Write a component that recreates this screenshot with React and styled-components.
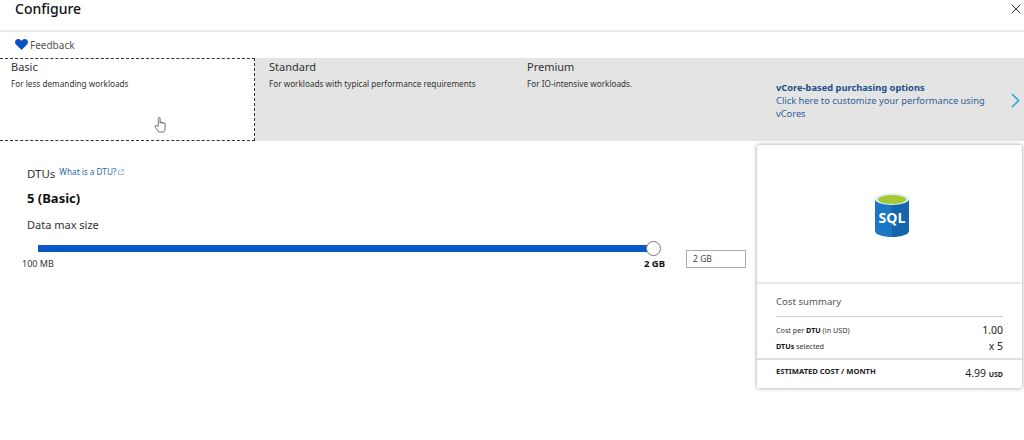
import React from 'react';
import styled, { createGlobalStyle } from 'styled-components';

const GlobalStyle = createGlobalStyle`
  html, body {
    margin: 0;
    padding: 0;
    background: #fff;
  }
  body {
    font-family: 'Noto Sans', 'Open Sans', sans-serif;
    color: #222;
  }
  * {
    box-sizing: border-box;
  }
`;

function App() {
  return (
    <Page>
      <GlobalStyle />
      <Header>
        <Title>Configure</Title>
        <CloseIcon viewBox='0 0 10 10'>
          <path d='M0.5 0.5 L9.5 9.5 M9.5 0.5 L0.5 9.5' />
        </CloseIcon>
      </Header>
      <FeedbackRow>
        <HeartIcon viewBox='0 0 13 11'>
          <path d='M6.5 11 L1 5.6 C-0.4 4.1 -0.2 1.9 1.1 0.8 C2.6 -0.4 4.9 -0.2 6.5 1.8 C8.1 -0.2 10.4 -0.4 11.9 0.8 C13.2 1.9 13.4 4.1 12 5.6 Z' />
        </HeartIcon>
        <FeedbackText>Feedback</FeedbackText>
      </FeedbackRow>
      <Tabs>
        <Tier $active>
          <TierName>Basic</TierName>
          <TierText>For less demanding workloads</TierText>
          <HandCursor viewBox='0 0 14 18'>
            <path d='M4.6 10.5 V2 C4.6 0.5 6.6 0.5 6.6 2 V7.2 M6.6 6.6 C6.6 5.4 8.4 5.4 8.4 6.6 V7.6 M8.4 7 C8.4 6 10.2 6 10.2 7 V8 M10.2 7.6 C10.2 6.6 12 6.6 12 7.6 V12 C12 14.5 11 15.6 10.6 16.6 H5.2 C4.4 15 2.8 13.6 1.4 11.4 C0.6 10 2 8.8 3.2 9.8 L4.6 11' />
          </HandCursor>
        </Tier>
        <Tier>
          <TierName>Standard</TierName>
          <TierText>For workloads with typical performance requirements</TierText>
        </Tier>
        <Tier>
          <TierName>Premium</TierName>
          <TierText>For IO-intensive workloads.</TierText>
        </Tier>
        <VCorePanel>
          <VCoreText>
            <VCoreTitle>vCore-based purchasing options</VCoreTitle>
            <VCoreBody>Click here to customize your performance using vCores</VCoreBody>
          </VCoreText>
          <Chevron viewBox='0 0 9 15'>
            <path d='M1 1 L7.6 7.5 L1 14' />
          </Chevron>
        </VCorePanel>
      </Tabs>
      <Body>
        <Settings>
          <DtuRow>
            <DtuLabel>DTUs</DtuLabel>
            <DtuLink>
              What is a DTU?
              <svg width='6' height='6' viewBox='0 0 6 6'>
                <path
                  fill='none'
                  stroke='#8fa9c4'
                  strokeWidth='0.7'
                  d='M2.4 1 H0.5 V5.5 H5 V3.6 M3.4 0.4 H5.6 V2.6 M5.5 0.5 L2.6 3.4'
                />
              </svg>
            </DtuLink>
          </DtuRow>
          <DtuValue>5 (Basic)</DtuValue>
          <SizeLabel>Data max size</SizeLabel>
          <SliderRow>
            <SliderColumn>
              <Track>
                <Thumb />
              </Track>
              <SliderLabels>
                <span>100 MB</span>
                <MaxLabel>2 GB</MaxLabel>
              </SliderLabels>
            </SliderColumn>
            <SizeInput>2 GB</SizeInput>
          </SliderRow>
        </Settings>
        <CostCard>
          <IconArea>
            <svg width='34' height='44' viewBox='0 0 34 44'>
              <path fill='#1b76c4' d='M0 6 V38 C0 41.5 8 44 17 44 V6 Z' />
              <path fill='#1565ad' d='M34 6 V38 C34 41.5 26 44 17 44 V6 Z' />
              <ellipse cx='17' cy='6' rx='17' ry='6' fill='#dff0f8' />
              <ellipse cx='17' cy='6.5' rx='14' ry='4.5' fill='#a5c935' />
              <SqlText x='17' y='30' textAnchor='middle'>
                SQL
              </SqlText>
            </svg>
          </IconArea>
          <Summary>
            <SummaryTitle>Cost summary</SummaryTitle>
            <CostRow>
              <CostLabel>
                Cost per <b>DTU</b> (in USD)
              </CostLabel>
              <CostValue>1.00</CostValue>
            </CostRow>
            <CostRow>
              <CostLabel>
                <b>DTUs</b> selected
              </CostLabel>
              <CostValue>x 5</CostValue>
            </CostRow>
          </Summary>
          <Estimate>
            <EstimateLabel>ESTIMATED COST / MONTH</EstimateLabel>
            <EstimateValue>
              4.99 <small>USD</small>
            </EstimateValue>
          </Estimate>
        </CostCard>
      </Body>
    </Page>
  );
}

export default App;

const Page = styled.div`
  width: 1024px;
  height: 440px;
  overflow: hidden;
  background: #fff;
`;

const Header = styled.div`
  height: 32px;
  display: flex;
  align-items: center;
  justify-content: space-between;
  padding: 0 3px 12px 15px;
  border-bottom: 2px solid #e9e9e9;
`;

const Title = styled.div`
  font-size: 14px;
  font-weight: 500;
  color: #111;
  margin-top: -1px;
`;

const CloseIcon = styled.svg`
  width: 10px;
  height: 10px;
  stroke: #333;
  stroke-width: 1;
  fill: none;
`;

const FeedbackRow = styled.div`
  height: 26px;
  display: flex;
  align-items: center;
  gap: 2px;
  padding-left: 15px;
`;

const HeartIcon = styled.svg`
  width: 13px;
  height: 11px;
  margin-top: -2px;
  fill: #0a52c4;
`;

const FeedbackText = styled.span`
  font-size: 10px;
  color: #555;
`;

const Tabs = styled.div`
  height: 83px;
  display: flex;
  background: #e4e4e4;
`;

const Tier = styled.div`
  position: relative;
  flex: none;
  width: ${(p) => (p.$active ? '255px' : '258px')};
  padding: ${(p) => (p.$active ? '0 0 0 11px' : '0 0 0 14px')};
  background: ${(p) => (p.$active ? '#fff' : 'transparent')};
  border: 1px dashed ${(p) => (p.$active ? '#333' : 'transparent')};
  border-left: none;
`;

const TierName = styled.div`
  font-size: 11px;
  line-height: 15px;
  color: #333;
`;

const TierText = styled.div`
  margin-top: 4px;
  font-size: 8.2px;
  line-height: 12px;
  color: #333;
`;

const HandCursor = styled.svg`
  position: absolute;
  left: 154px;
  top: 57px;
  width: 13px;
  height: 18px;
  fill: #fff;
  stroke: #555;
  stroke-width: 0.9;
`;

const VCorePanel = styled.div`
  flex: 1;
  display: flex;
  align-items: flex-start;
  padding: 23px 0 0 15px;
  margin-left: -10px;
`;

const VCoreText = styled.div`
  width: 226px;
  font-size: 9.3px;
  line-height: 13px;
`;

const VCoreTitle = styled.div`
  font-weight: 700;
  color: #1b4f8a;
`;

const VCoreBody = styled.div`
  color: #2a5f97;
`;

const Chevron = styled.svg`
  width: 9px;
  height: 15px;
  margin: 12px 0 0 9px;
  fill: none;
  stroke: #2ea3d5;
  stroke-width: 1.6;
`;

const Body = styled.div`
  display: flex;
  justify-content: space-between;
  padding: 4px 2px 0 0;
`;

const Settings = styled.div`
  width: 746px;
  padding-top: 20px;
`;

const DtuRow = styled.div`
  display: flex;
  align-items: flex-start;
  gap: 4px;
  padding-left: 27px;
  height: 17px;
`;

const DtuLabel = styled.span`
  font-size: 11.5px;
  line-height: 17px;
  color: #333;
`;

const DtuLink = styled.span`
  display: flex;
  align-items: center;
  gap: 2px;
  font-size: 8.2px;
  line-height: 13px;
  color: #1f6aa8;
  svg {
    margin-top: 1px;
  }
`;

const DtuValue = styled.div`
  margin-top: 7px;
  padding-left: 27px;
  font-size: 13px;
  line-height: 18px;
  font-weight: 700;
  color: #111;
`;

const SizeLabel = styled.div`
  margin-top: 10px;
  padding-left: 27px;
  font-size: 11px;
  line-height: 16px;
  color: #333;
`;

const SliderRow = styled.div`
  display: flex;
  align-items: flex-start;
  margin-top: 12px;
`;

const SliderColumn = styled.div`
  width: 687px;
  padding-left: 38px;
`;

const Track = styled.div`
  position: relative;
  width: 616px;
  height: 7px;
  background: #0858c8;
`;

const Thumb = styled.div`
  position: absolute;
  right: -7px;
  top: -4px;
  width: 15px;
  height: 15px;
  border-radius: 50%;
  background: #fff;
  border: 1.5px solid #777;
`;

const SliderLabels = styled.div`
  display: flex;
  justify-content: space-between;
  width: 643px;
  margin: 6px 0 0 -16px;
  font-size: 9px;
  line-height: 12px;
  color: #333;
`;

const MaxLabel = styled.span`
  font-weight: 700;
  font-size: 9.5px;
  color: #111;
`;

const SizeInput = styled.div`
  width: 60px;
  height: 18px;
  margin-top: 5px;
  padding-left: 6px;
  font-size: 8.5px;
  line-height: 16px;
  color: #444;
  border: 1px solid #aaa;
`;

const CostCard = styled.div`
  width: 265px;
  height: 243px;
  background: #fff;
  border-radius: 2px;
  box-shadow: 0 0 4px rgba(0, 0, 0, 0.4);
`;

const IconArea = styled.div`
  height: 139px;
  display: flex;
  justify-content: center;
  padding: 48px 0 0 5px;
  border-bottom: 2px solid #e8e8e8;
`;

const SqlText = styled.text`
  font-family: 'Open Sans', 'Noto Sans', sans-serif;
  font-size: 14px;
  font-weight: 700;
  fill: #fff;
`;

const Summary = styled.div`
  height: 74px;
  padding: 9px 19px 0;
`;

const SummaryTitle = styled.div`
  height: 24px;
  margin-bottom: 5px;
  font-size: 9.6px;
  line-height: 17px;
  color: #555;
  border-bottom: 1px solid #ccc;
`;

const CostRow = styled.div`
  display: flex;
  justify-content: space-between;
  align-items: center;
  height: 16px;
`;

const CostLabel = styled.span`
  font-size: 7.2px;
  color: #333;
  b {
    color: #111;
  }
`;

const CostValue = styled.span`
  font-size: 10.5px;
  color: #222;
`;

const Estimate = styled.div`
  display: flex;
  justify-content: space-between;
  align-items: center;
  height: 28px;
  padding: 0 19px;
  border-top: 2px solid #e0e0e0;
`;

const EstimateLabel = styled.span`
  font-size: 7.6px;
  font-weight: 700;
  color: #222;
  margin-top: -4px;
`;

const EstimateValue = styled.span`
  font-size: 10.5px;
  color: #222;
  small {
    font-size: 7px;
    font-weight: 700;
  }
`;
